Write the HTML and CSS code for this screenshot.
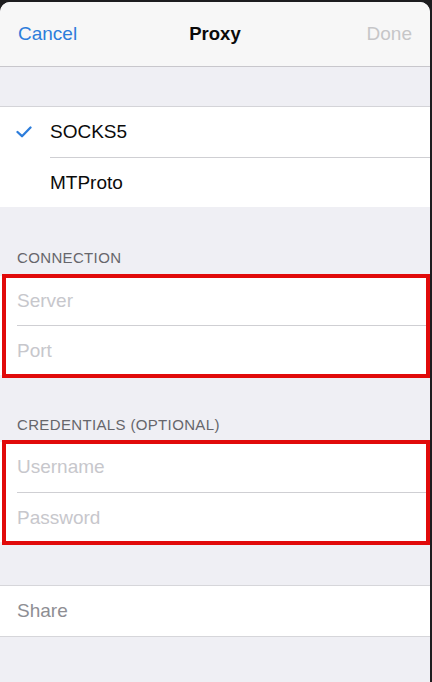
FILE: index.html
```html
<!DOCTYPE html>
<html lang="en">
<head>
<meta charset="utf-8">
<title>Proxy</title>
<link rel="stylesheet" href="styles.css">
</head>
<body>
<div class="sheet">
  <header class="nav">
    <span class="nav-btn cancel">Cancel</span>
    <span class="nav-title">Proxy</span>
    <span class="nav-btn done">Done</span>
  </header>

  <section class="group types">
    <div class="row">
      <span class="lead">
        <svg class="check" width="16" height="12" viewBox="0 0 16 12"><path d="M1.5 6 L6 10.2 L14.5 1.5" fill="none" stroke="#2d7ddb" stroke-width="2.3" stroke-linecap="round" stroke-linejoin="round"/></svg>
      </span>
      <span class="cell">SOCKS5</span>
    </div>
    <div class="row">
      <span class="lead"></span>
      <span class="cell sep">MTProto</span>
    </div>
  </section>

  <div class="section-header first">CONNECTION</div>
  <section class="group fields marked conn">
    <div class="row field"><input class="input" placeholder="Server"></div>
    <div class="row field sep"><input class="input" placeholder="Port"></div>
  </section>

  <div class="section-header second">CREDENTIALS (OPTIONAL)</div>
  <section class="group fields marked creds">
    <div class="row field"><input class="input" placeholder="Username"></div>
    <div class="row field sep"><input class="input" placeholder="Password"></div>
  </section>

  <section class="group share">
    <div class="row field"><span class="share-label">Share</span></div>
  </section>
</div>
</body>
</html>
```

FILE: styles.css
```css
html, body {
  margin: 0;
  padding: 0;
}
body {
  width: 432px;
  height: 682px;
  overflow: hidden;
  background: #1d1d1f;
  font-family: "Liberation Sans", Arial, sans-serif;
}
.sheet {
  margin: 2px 2px 0 0;
  height: 680px;
  background: #efeff4;
  border-radius: 10px 10px 0 0;
  overflow: hidden;
  display: flex;
  flex-direction: column;
}
.nav {
  height: 64px;
  flex: none;
  background: #f7f7f7;
  border-bottom: 1px solid #c8c7cc;
  display: grid;
  grid-template-columns: 1fr auto 1fr;
  align-items: center;
  padding: 0 18px;
  font-size: 19px;
}
.nav-btn.cancel { color: #2d7ddb; justify-self: start; }
.nav-btn.done { color: #c6c6c8; justify-self: end; }
.nav-title {
  font-size: 18.5px;
  font-weight: bold;
  color: #0a0a0a;
}
.group {
  background: #fff;
  flex: none;
}
.types {
  margin-top: 39px;
  border-top: 1px solid #d4d4d8;
}
.row {
  display: flex;
  height: 50px;
  box-sizing: border-box;
  font-size: 19px;
  color: #0b0b0b;
}
.lead {
  width: 50px;
  flex: none;
  display: flex;
  align-items: center;
  padding-left: 16px;
  box-sizing: border-box;
}
.cell {
  flex: 1;
  display: flex;
  align-items: center;
}
.cell.sep { border-top: 1px solid #cfcfd3; }

.section-header {
  flex: none;
  display: flex;
  align-items: flex-end;
  box-sizing: border-box;
  padding: 0 17px;
  font-size: 15px;
  line-height: 20px;
  letter-spacing: 0.35px;
  color: #66666b;
}
.section-header.first { height: 69px; padding-bottom: 8px; }
.section-header.second { height: 67px; padding-bottom: 7px; }

.field {
  padding-left: 17px;
  align-items: center;
}
.fields .row:first-child { height: 49px; }
.fields .row.sep {
  background-image: linear-gradient(#cfcfd3, #cfcfd3);
  background-size: calc(100% - 17px) 1px;
  background-position: 17px 0;
  background-repeat: no-repeat;
  padding-top: 1px;
}
.creds .row:first-child { height: 50px; }
.input {
  border: 0;
  outline: none;
  background: transparent;
  padding: 0;
  margin: 0;
  width: 100%;
  font-family: "Liberation Sans", Arial, sans-serif;
  font-size: 19px;
  color: #000;
}
.input::placeholder { color: #c7c7cc; }
.marked {
  position: relative;
}
.marked::after {
  content: "";
  position: absolute;
  top: -2px;
  bottom: -3px;
  left: 2px;
  right: 0;
  border: 4px solid #e10a0a;
  pointer-events: none;
}
.share {
  margin-top: 43px;
  border-top: 1px solid #d6d6da;
  border-bottom: 1px solid #d6d6da;
}
.share-label { color: #8e8e93; }
```
